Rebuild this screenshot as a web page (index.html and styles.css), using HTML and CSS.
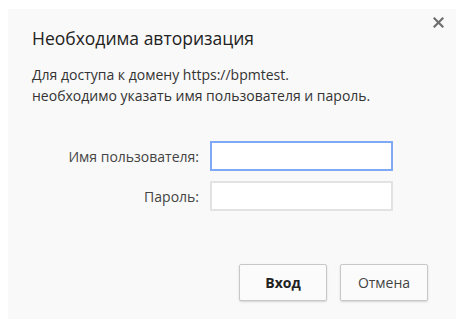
FILE: index.html
```html
<!DOCTYPE html>
<html lang="ru">
<head>
    <meta charset="UTF-8">
    <meta name="viewport" content="width=device-width, initial-scale=1.0">
    <title>Необходима авторизация</title>
    <link rel="stylesheet" href="styles.css">
</head>
<body>
    <div class="dialog">
        <button class="close" title="Закрыть">
            <svg width="11" height="11" viewBox="0 0 11 11">
                <path d="M1.5 1.5 L9.5 9.5 M9.5 1.5 L1.5 9.5" stroke="#6f6f6f" stroke-width="2.2" stroke-linecap="square"/>
            </svg>
        </button>
        <h1 class="title">Необходима авторизация</h1>
        <p class="message">Для доступа к домену https://bpmtest.<br>необходимо указать имя пользователя и пароль.</p>

        <div class="form">
            <label for="username">Имя пользователя:</label>
            <input type="text" id="username" class="focused">
            <label for="password">Пароль:</label>
            <input type="password" id="password">
        </div>

        <div class="actions">
            <button class="btn primary">Вход</button>
            <button class="btn">Отмена</button>
        </div>
    </div>
</body>
</html>
```

FILE: styles.css
```css
body {
    margin: 0;
    background-color: #fff;
    font-family: "Open Sans", "Noto Sans", sans-serif;
    color: #333;
}

.dialog {
    position: relative;
    box-sizing: border-box;
    width: 448px;
    height: 310px;
    margin: 9px 0 0 8px;
    padding: 18px 28px 0 24px;
    background-color: #f9f9f9;
}

.close {
    position: absolute;
    top: 8px;
    left: 425px;
    border: none;
    background: none;
    padding: 0;
    line-height: 0;
    cursor: pointer;
}

.title {
    margin: 0;
    font-size: 17.5px;
    font-weight: normal;
    line-height: 22px;
    color: #222;
}

.message {
    margin: 15px 0 0;
    font-size: 14px;
    line-height: 21px;
    color: #333;
}

.form {
    display: grid;
    grid-template-columns: 167px 183px;
    column-gap: 11px;
    row-gap: 10px;
    align-items: center;
    margin-top: 35px;
}

.form label {
    text-align: right;
    font-size: 14px;
    color: #444;
}

.form input {
    box-sizing: border-box;
    width: 183px;
    height: 30px;
    margin: 0;
    padding: 0 6px;
    border: 2px solid #e2e2e2;
    background-color: #fff;
    outline: none;
}

.form input.focused {
    border-color: #7fa9f5;
}

.actions {
    display: flex;
    justify-content: flex-end;
    gap: 13px;
    margin-top: 53px;
}

.btn {
    box-sizing: border-box;
    width: 88px;
    height: 37px;
    border: 1px solid #c8c8c8;
    border-radius: 2px;
    background-color: #fbfbfb;
    box-shadow: 0 1px 2px rgba(0, 0, 0, 0.15);
    font-family: inherit;
    font-size: 14px;
    color: #444;
    cursor: pointer;
}

.btn.primary {
    font-weight: bold;
    color: #222;
}
```
